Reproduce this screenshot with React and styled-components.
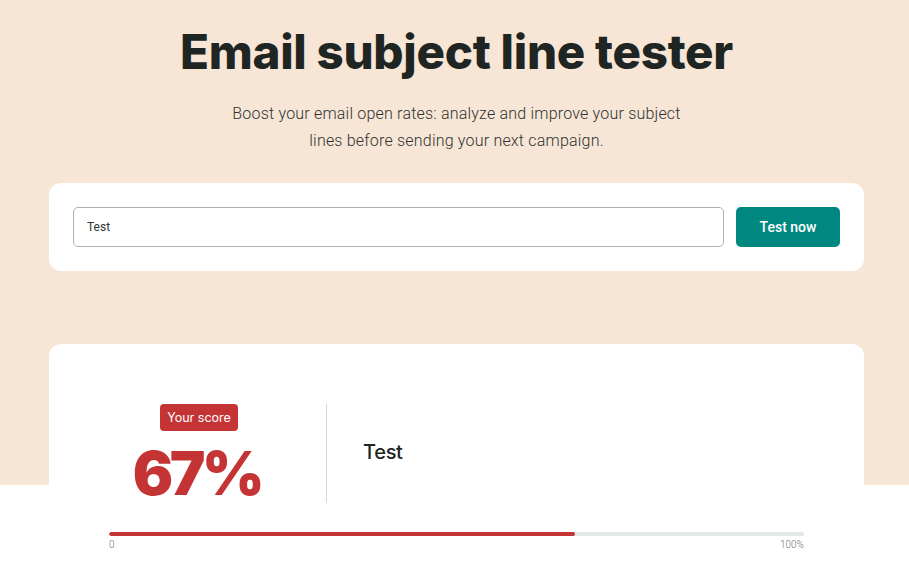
import React from "react";
import styled, { createGlobalStyle } from "styled-components";

const GlobalStyle = createGlobalStyle`
  html, body {
    margin: 0;
    padding: 0;
  }
  body {
    font-family: Roboto, "Liberation Sans", sans-serif;
    color: #1f2523;
  }
`;

const Page = styled.div`
  height: 570px;
  overflow: hidden;
  background: linear-gradient(to bottom, #f7e6d6 485px, #ffffff 485px);
  padding: 0 45px 0 49px;
`;

const Header = styled.header`
  display: flex;
  flex-direction: column;
  align-items: center;
  padding-top: 22px;
`;

const Title = styled.h1`
  margin: 0;
  font-family: Inter, "Liberation Sans", sans-serif;
  font-weight: 800;
  font-size: 47.5px;
  line-height: 60px;
  letter-spacing: -0.3px;
  color: #1f2523;
`;

const Subtitle = styled.p`
  margin: 18px 0 0;
  max-width: 480px;
  text-align: center;
  font-weight: 300;
  font-size: 16px;
  line-height: 27px;
  letter-spacing: 0.2px;
  color: #2e3331;
`;

const Card = styled.section`
  background: #ffffff;
  border-radius: 12px;
  padding: ${(p) => p.$pad};
  margin-top: ${(p) => p.$top};
`;

const SearchRow = styled.form`
  display: flex;
  gap: 12px;
`;

const Input = styled.input`
  flex: 1;
  height: 40px;
  box-sizing: border-box;
  border: 1px solid #a9b3b1;
  border-radius: 5px;
  padding: 0 13px;
  font-family: Roboto, "Liberation Sans", sans-serif;
  font-size: 12px;
  color: #333;
  outline: none;
`;

const Button = styled.button`
  width: 104px;
  height: 40px;
  border: none;
  border-radius: 5px;
  background: #008780;
  color: #ffffff;
  font-family: Roboto, "Liberation Sans", sans-serif;
  font-weight: 500;
  font-size: 14px;
  cursor: pointer;
`;

const ScoreRow = styled.div`
  display: flex;
  align-items: stretch;
`;

const ScoreColumn = styled.div`
  width: 180px;
  display: flex;
  flex-direction: column;
  align-items: center;
`;

const Badge = styled.span`
  background: #c43435;
  color: #ffffff;
  font-family: Inter, "Liberation Sans", sans-serif;
  font-weight: 400;
  font-size: 12.5px;
  line-height: 27px;
  padding: 0 7px;
  border-radius: 4px;
`;

const Score = styled.div`
  font-family: Inter, "Liberation Sans", sans-serif;
  font-weight: 900;
  font-size: 60px;
  line-height: 70px;
  letter-spacing: -3.5px;
  color: #c43435;
  margin-top: 7px;
  padding-right: 4px;
`;

const Divider = styled.div`
  width: 1px;
  background: #d6d9d8;
  margin-left: 37px;
  height: 99px;
`;

const Subject = styled.div`
  padding: 36px 0 0 36px;
  font-family: Inter, "Liberation Sans", sans-serif;
  font-weight: 500;
  font-size: 20px;
  letter-spacing: -0.3px;
  color: #1f2523;
`;

const Meter = styled.div`
  margin-top: 24px;
`;

const Track = styled.div`
  height: 4px;
  border-radius: 2px;
  background: #e2e8e6;
  overflow: hidden;
`;

const Fill = styled.div`
  height: 100%;
  background: #c43435;
  border-radius: 2px;
`;

const Scale = styled.div`
  display: flex;
  justify-content: space-between;
  margin-top: 3px;
  font-size: 10px;
  font-weight: 300;
  color: #6f7573;
`;

export default function App() {
  const score = 67;
  return (
    <>
      <GlobalStyle />
      <Page>
        <Header>
          <Title>Email subject line tester</Title>
          <Subtitle>
            Boost your email open rates: analyze and improve your subject lines
            before sending your next campaign.
          </Subtitle>
        </Header>

        <Card $pad="24px" $top="29px">
          <SearchRow onSubmit={(e) => e.preventDefault()}>
            <Input defaultValue="Test" />
            <Button type="submit">Test now</Button>
          </SearchRow>
        </Card>

        <Card $pad="60px 60px 40px" $top="73px">
          <ScoreRow>
            <ScoreColumn>
              <Badge>Your score</Badge>
              <Score>{score}%</Score>
            </ScoreColumn>
            <Divider />
            <Subject>Test</Subject>
          </ScoreRow>
          <Meter>
            <Track>
              <Fill style={{ width: `${score}%` }} />
            </Track>
            <Scale>
              <span>0</span>
              <span>100%</span>
            </Scale>
          </Meter>
        </Card>
      </Page>
    </>
  );
}
